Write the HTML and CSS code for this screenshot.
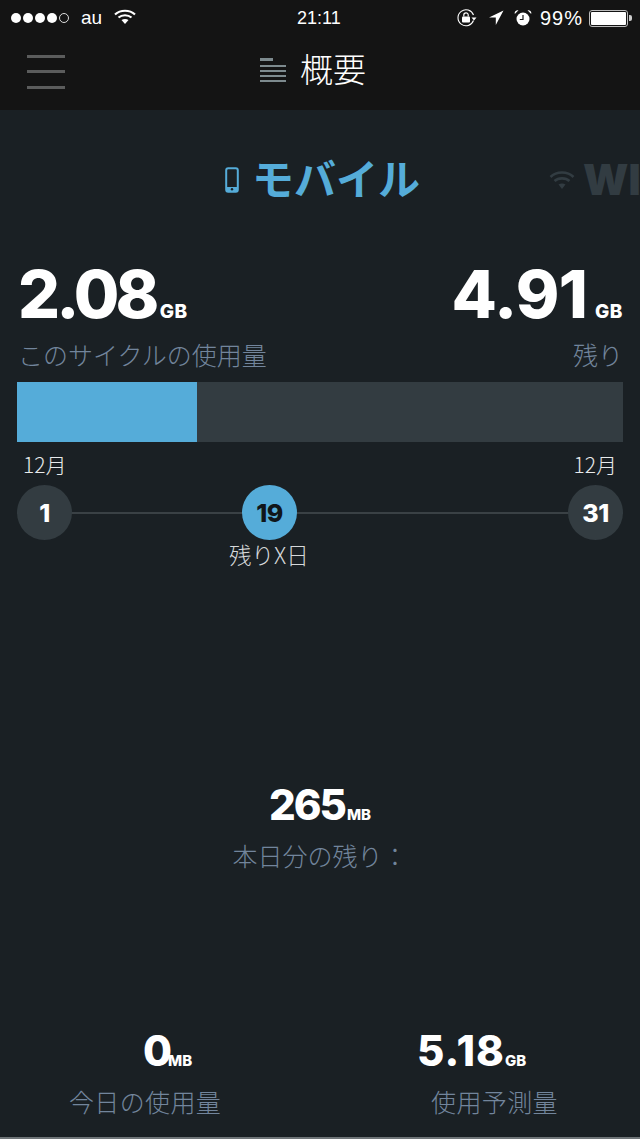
FILE: index.html
```html
<!DOCTYPE html>
<html lang="ja">
<head>
<meta charset="utf-8">
<title>概要</title>
<link rel="stylesheet" href="styles.css">
</head>
<body>
<div class="app">
  <header class="top">
    <div class="status">
      <div class="status-left">
        <div class="signal"><i></i><i></i><i></i><i></i><i class="off"></i></div>
        <span class="carrier">au</span>
        <svg class="wifi" width="22" height="16" viewBox="0 0 22 16"><path d="M1 5.5C6.5.5 15.500.5 21 5.500M4.500 8.500C8 5.500 14 5.500 17.500 8.500" fill="none" stroke="#fff" stroke-width="2.200"/><path d="M7.500 11C9.500 9.500 12.500 9.500 14.500 11L11 15Z" fill="#fff"/></svg>
      </div>
      <div class="clock">21:11</div>
      <div class="status-right">
        <svg class="lock" width="20" height="18" viewBox="0 0 20 18"><path d="M16.500 11.500A8 8 0 1 1 16.500 6" fill="none" stroke="#fff" stroke-width="1.100"/><path d="M14.500 8.500h5l-2.500 3z" fill="#fff"/><rect x="5" y="7.500" width="8" height="6" rx="1" fill="#fff"/><path d="M6.800 7.500V6a2.200 2.200 0 0 1 4.400 0v1.500" fill="none" stroke="#fff" stroke-width="1.200"/></svg>
        <svg class="arrow" width="16" height="16" viewBox="0 0 16 16"><path d="M15.500.5 1 7.500h6.800V15z" fill="#fff"/></svg>
        <svg class="alarm" width="18" height="18" viewBox="0 0 18 18"><circle cx="9" cy="10" r="6.500" fill="#fff"/><path d="M9 6v4.500H5.800" fill="none" stroke="#141414" stroke-width="1.200"/><path d="M.8 5 4.500 1.300A3 3 0 0 0 .8 5ZM17.200 5 13.500 1.300A3 3 0 0 1 17.200 5Z" fill="#fff"/></svg>
        <span class="pct">99%</span>
        <div class="battery"><div class="battery-fill"></div></div>
        <div class="battery-tip"></div>
      </div>
    </div>
    <div class="nav">
      <div class="burger"><i></i><i></i><i></i></div>
      <div class="nav-title">
        <div class="list-icon"><i class="short"></i><i></i><i></i><i></i><i></i></div>
        <span class="nav-text">概要</span>
      </div>
    </div>
  </header>

  <main class="main">
    <div class="tabs">
      <svg class="phone" width="14" height="26" viewBox="0 0 14 26"><rect x="1.200" y="1.200" width="11.600" height="23.600" rx="2" fill="none" stroke="#55acd9" stroke-width="2"/><rect x="1" y="20" width="12" height="5" fill="#55acd9"/><circle cx="7" cy="22.300" r="1.200" fill="#1a2024"/></svg>
      <span class="tab-active">モバイル</span>
      <svg class="tab-wifi" width="26" height="20" viewBox="0 0 26 20"><path d="M1.500 7C7.500 1 18.500 1 24.500 7M5.500 11C9.500 7.500 16.500 7.500 20.500 11" fill="none" stroke="#323c42" stroke-width="2.600"/><path d="M9.500 14.500C11.500 13 14.500 13 16.500 14.500L13 19Z" fill="#323c42"/></svg>
      <span class="tab-idle">WI-FI</span>
    </div>

    <section class="usage">
      <div class="usage-col">
        <div class="big tight">2.08<small>GB</small></div>
        <div class="label">このサイクルの使用量</div>
      </div>
      <div class="usage-col right">
        <div class="big">4.91<small>GB</small></div>
        <div class="label">残り</div>
      </div>
    </section>

    <div class="bar"><div class="bar-fill"></div></div>

    <section class="cycle">
      <div class="months"><span>12月</span><span>12月</span></div>
      <div class="track">
        <div class="day">1</div>
        <div class="day now">19</div>
        <div class="day">31</div>
      </div>
      <div class="remain">残りX日</div>
    </section>

    <section class="today">
      <div class="mid">265<small>MB</small></div>
      <div class="label">本日分の残り：</div>
    </section>

    <section class="bottom">
      <div class="stat first">
        <div class="mid">0<small>MB</small></div>
        <div class="label">今日の使用量</div>
      </div>
      <div class="stat second">
        <div class="mid">5.18<small>GB</small></div>
        <div class="label">使用予測量</div>
      </div>
    </section>
  </main>
</div>
</body>
</html>
```
FILE: styles.css
```css
* { box-sizing: border-box; }
html, body { margin: 0; height: 100%; }
body { background: #1a2024; font-family: "Noto Sans CJK JP", "Noto Sans", sans-serif; overflow: hidden; }
.app { width: 640px; height: 1139px; display: flex; flex-direction: column; border-bottom: 2px solid #6f7578; }

.top { height: 110px; background: #141414; flex: none; }
.status { height: 36px; display: flex; align-items: center; justify-content: space-between; position: relative; padding: 0 8px 0 11px; color: #fff; font-family: "Liberation Sans", Arial, sans-serif; }
.status-left, .status-right { display: flex; align-items: center; }
.signal { display: flex; gap: 2px; }
.signal i { width: 10px; height: 10px; border-radius: 50%; background: #fff; }
.signal i.off { background: none; border: 1px solid #ddd; }
.carrier { font-size: 19px; margin-left: 12px; }
.wifi { margin-left: 12px; margin-top: -3px; }
.clock { position: absolute; left: 297px; top: 7px; font-size: 18px; line-height: 22px; }
.lock { margin-right: 11px; }
.arrow { margin-right: 10px; }
.alarm { margin-right: 8px; }
.pct { font-size: 20px; letter-spacing: 1px; margin-right: 6px; }
.battery { width: 39px; height: 17px; border: 1px solid #bbb; border-radius: 3px; padding: 1px; }
.battery-fill { width: 100%; height: 100%; background: #fff; border-radius: 1px; }
.battery-tip { width: 3px; height: 6px; background: #ccc; border-radius: 0 2px 2px 0; margin-left: 1px; }

.nav { height: 74px; display: flex; align-items: center; position: relative; }
.burger { display: flex; flex-direction: column; gap: 12.500px; margin: -3px 0 0 27px; }
.burger i { display: block; width: 38px; height: 3px; background: #5b5c5c; }
.nav-title { position: absolute; left: 260px; top: 12px; height: 44px; display: flex; align-items: center; }
.list-icon { display: flex; flex-direction: column; gap: 3px; width: 26px; }
.list-icon i { display: block; height: 2px; background: #7d8a8e; }
.list-icon i.short { width: 13px; height: 3px; margin-bottom: 1px; }
.nav-text { color: #fff; font-size: 33px; font-weight: 300; line-height: 44px; margin: -4px 0 0 14px; white-space: nowrap; }

.main { flex: 1; display: flex; flex-direction: column; padding: 0 17px; position: relative; overflow: hidden; }
.tabs { height: 70px; margin: 32px -17px 0; display: flex; align-items: center; padding-left: 225px; white-space: nowrap; overflow: hidden; }
.phone { flex: none; margin-top: 5px; }
.tab-active { color: #55acd9; font-size: 42px; font-weight: 700; margin-left: 13px; line-height: 50px; flex: none; }
.tab-wifi { flex: none; margin: 6px 0 0 129px; }
.tab-idle { color: #323c42; font-family: Inter, sans-serif; font-size: 42px; font-weight: 900; margin: 4px 0 0 8px; flex: none; }

.usage { display: flex; justify-content: space-between; margin-top: 53px; padding: 0 0 0 1px; }
.usage-col.right { text-align: right; }
.big { color: #fff; font-family: Inter, sans-serif; font-weight: 800; font-size: 66px; line-height: 59px; letter-spacing: -.7px; }
.big.tight { letter-spacing: -3.800px; }
.big small { font-size: 19px; font-weight: 800; letter-spacing: .5px; margin-left: 8px; }
.big.tight small { margin-left: 4px; }
.label { color: #72859c; font-size: 25px; font-weight: 300; line-height: 26px; white-space: nowrap; }

.bar { height: 60px; background: #333c41; margin-top: 15px; flex: none; }
.bar-fill { width: 180px; height: 100%; background: #55acd9; }

.cycle { display: flex; flex-direction: column; }
.months { display: flex; justify-content: space-between; padding: 0 6px; color: #e8eaeb; font-size: 21px; font-weight: 300; line-height: 28px; margin-top: 8px; }
.track { display: flex; margin-top: 7px; background: linear-gradient(#3a4145, #3a4145) center / 100% 2px no-repeat; }
.day { width: 55px; height: 55px; border-radius: 50%; background: #333c41; color: #fff; font-family: Inter, sans-serif; font-weight: 800; font-size: 25px; letter-spacing: -.5px; display: flex; align-items: center; justify-content: center; }
.day.now { background: #55acd9; color: #10161a; margin: 0 auto 0 170px; }
.remain { color: #d5d8da; font-size: 22.500px; font-weight: 300; line-height: 26px; margin: 1px 0 0 212px; }

.today { text-align: center; margin-top: 215px; }
.mid { color: #fff; font-family: Inter, sans-serif; font-weight: 800; font-size: 42px; line-height: 46px; letter-spacing: -2px; }
.mid small { font-size: 15px; font-weight: 800; letter-spacing: 0; margin-left: 2px; }
.today .label { margin-top: 4px; }

.bottom { display: flex; margin: 160px -17px 0; }
.stat .label { margin-top: 4px; letter-spacing: .35px; }
.stat .mid { letter-spacing: 1px; }
.stat .mid small { margin-left: 0; }
.stat.first { margin-left: 69px; }
.stat.first .mid { padding-left: 74px; letter-spacing: -4px; }
.stat.second { margin-left: 196px; }
.stat.second .label { padding-left: 14px; }
```
